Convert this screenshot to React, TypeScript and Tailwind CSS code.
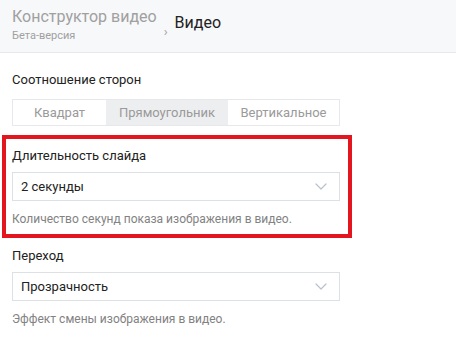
import { ReactNode } from "react";

const SEGMENTS = ["Квадрат", "Прямоугольник", "Вертикальное"];

function Chevron() {
  return (
    <svg width="12" height="7" viewBox="0 0 12 7" fill="none" className="text-[#b8c1cc]">
      <path d="M1 1l5 5 5-5" stroke="currentColor" strokeWidth="1.2" strokeLinecap="round" strokeLinejoin="round" />
    </svg>
  );
}

function Select({ value }: { value: string }) {
  return (
    <div className="flex h-[29px] w-[328px] items-center justify-between border border-[#dce1e6] bg-white pl-[8px] pr-[12px]">
      <span className="text-[13px] text-[#222]">{value}</span>
      <Chevron />
    </div>
  );
}

function Label({ children }: { children: ReactNode }) {
  return <div className="text-[13px] leading-[16px] text-[#222]">{children}</div>;
}

function Hint({ children }: { children: ReactNode }) {
  return <div className="text-[12px] leading-[15px] text-[#828282]">{children}</div>;
}

export default function App() {
  return (
    <div className="h-[346px] w-[456px] overflow-hidden bg-white" style={{ fontFamily: "Roboto, 'Liberation Sans', sans-serif" }}>
      {/* header */}
      <div className="flex h-[53px] items-start border-b border-[#e7e8ec] bg-[#f7f8fa] pl-[12px]">
        <div className="flex flex-col pt-[7px]">
          <span className="text-[16px] leading-[20px] text-[#a0a0a0]">Конструктор видео</span>
          <span className="mt-[2px] text-[11px] leading-[14px] text-[#a0a0a0]">Бета-версия</span>
        </div>
        <span className="ml-[7px] mt-[24px] text-[13px] leading-[16px] text-[#a0a0a0]">›</span>
        <span className="ml-[7px] mt-[13px] text-[16px] leading-[20px] text-[#222]">Видео</span>
      </div>

      <div className="flex flex-col px-[12px]">
        <div className="mt-[19px]">
          <Label>Соотношение сторон</Label>
        </div>
        <div className="mt-[11px] flex h-[27px] w-[328px] border border-[#e7e8ec] bg-white">
          {SEGMENTS.map((s, i) => (
            <div
              key={s}
              className={
                "flex items-center justify-center text-[13px] text-[#9a9a9a] " +
                (i === 0 ? "w-[93px] " : i === 1 ? "w-[122px] bg-[#edeef0] " : "flex-1 ")
              }
            >
              {s}
            </div>
          ))}
        </div>

        {/* highlighted block */}
        <div className="-ml-[10px] mt-[9px] w-[350px] border-4 border-[#e3161f] pb-[7px] pl-[6px] pr-[8px] pt-[9px]">
          <Label>Длительность слайда</Label>
          <div className="mt-[8px]">
            <Select value="2 секунды" />
          </div>
          <div className="mt-[11px]">
            <Hint>Количество секунд показа изображения в видео.</Hint>
          </div>
        </div>

        <div className="mt-[10px]">
          <Label>Переход</Label>
        </div>
        <div className="mt-[8px]">
          <Select value="Прозрачность" />
        </div>
        <div className="mt-[11px]">
          <Hint>Эффект смены изображения в видео.</Hint>
        </div>
      </div>
    </div>
  );
}
